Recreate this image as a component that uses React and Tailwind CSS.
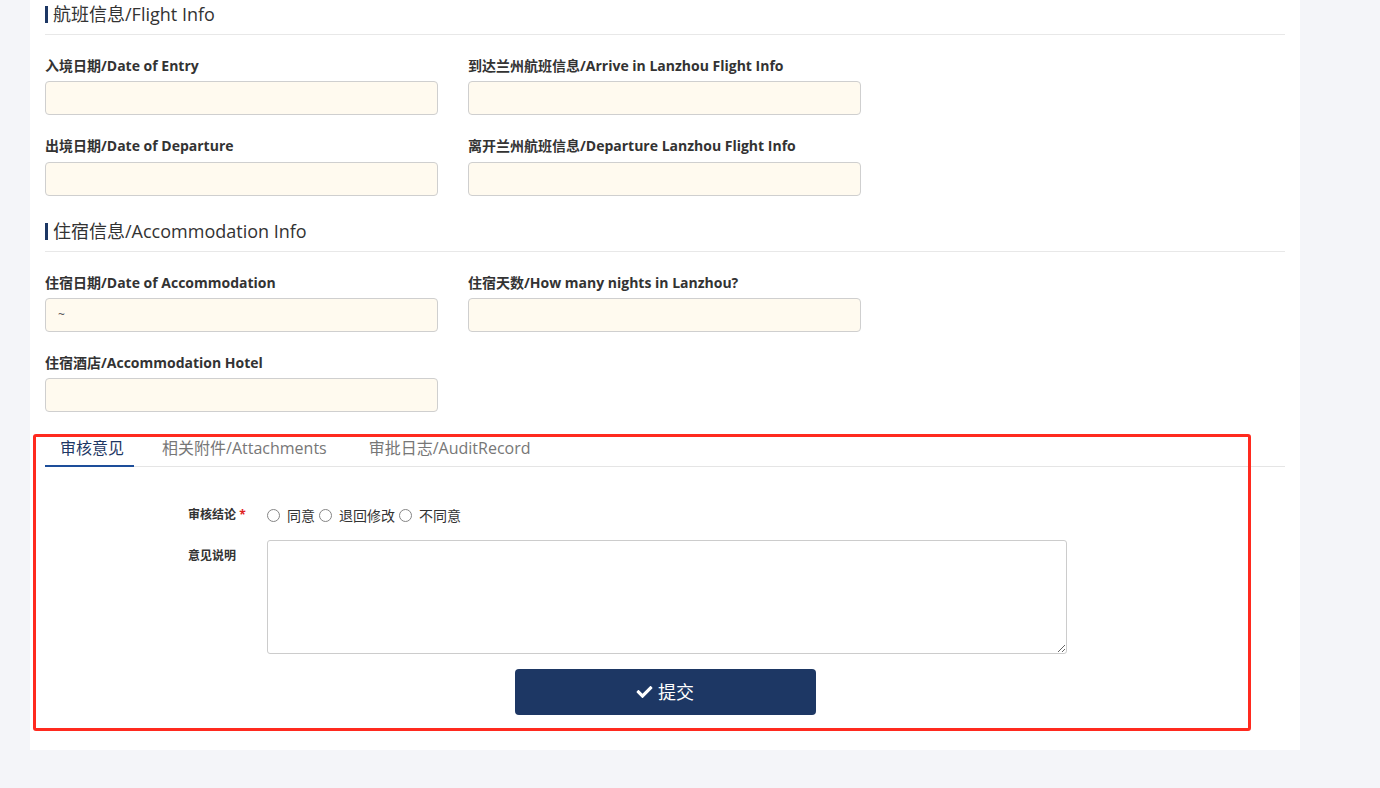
import React from "react";
import { FaCheck } from "react-icons/fa";

const FONT = { fontFamily: '"Open Sans", "Noto Sans CJK SC", sans-serif' };

function SectionTitle({ children }) {
  return (
    <div className="flex items-center border-b border-[#e8e8e8] pb-[6px]">
      <span className="w-[3px] h-[17px] bg-[#1d3764] mr-[5px]" />
      <span className="text-[18px] leading-[28px] text-[#333]">{children}</span>
    </div>
  );
}

function Field({ label, value, gap = "mb-[5px]" }) {
  return (
    <div className="w-[393px] mt-[21px]">
      <div className={"text-[14px] leading-[20px] font-bold text-[#333] whitespace-nowrap " + gap}>{label}</div>
      <div className="h-[34px] rounded-[4px] border border-[#cfcfcf] bg-[#fffaef] px-[12px] flex items-center text-[12px] text-[#555]">
        {value}
      </div>
    </div>
  );
}

function Radio({ label }) {
  return (
    <span className="inline-flex items-center mr-[4px]">
      <span className="w-[13px] h-[13px] rounded-full border border-[#858585] bg-white inline-block" />
      <span className="ml-[7px] text-[14px] text-[#333]">{label}</span>
    </span>
  );
}

export default function App() {
  return (
    <div style={FONT} className="relative min-h-[788px] bg-[#f4f5f9] pl-[30px] pb-[38px]">
      <div className="w-[1270px] bg-white px-[15px] pb-[35px]">
        <SectionTitle>航班信息/Flight Info</SectionTitle>
        <div className="flex gap-[30px]">
          <Field label="入境日期/Date of Entry" />
          <Field label="到达兰州航班信息/Arrive in Lanzhou Flight Info" />
        </div>
        <div className="flex gap-[30px] mb-[21px]">
          <Field label="出境日期/Date of Departure" gap="mb-[6px]" />
          <Field label="离开兰州航班信息/Departure Lanzhou Flight Info" gap="mb-[6px]" />
        </div>
        <SectionTitle>住宿信息/Accommodation Info</SectionTitle>
        <div className="flex gap-[30px]">
          <Field label="住宿日期/Date of Accommodation" value="~" />
          <Field label="住宿天数/How many nights in Lanzhou?" />
        </div>
        <div className="flex gap-[30px]">
          <Field label="住宿酒店/Accommodation Hotel" />
        </div>

        <div className="mt-[23px] flex border-b border-[#e5e5e5]">
          <div className="pl-[15px] pr-[10px] pt-[1px] pb-[5px] leading-[24px] text-[16px] text-[#1d3764] border-b-2 border-[#1d4e9a] -mb-px">审核意见</div>
          <div className="ml-[13px] px-[15px] pt-[1px] pb-[5px] leading-[24px] text-[16px] text-[#777]">相关附件/Attachments</div>
          <div className="ml-[12px] px-[15px] pt-[1px] pb-[5px] leading-[24px] text-[16px] text-[#777]">审批日志/AuditRecord</div>
        </div>

        <div className="pt-[38px]">
          <div className="flex items-center h-[20px]">
            <div className="ml-[143px] w-[79px] text-[12px] font-bold text-[#333]">
              审核结论 <span className="text-[#e02020]">*</span>
            </div>
            <div className="flex items-center">
              <Radio label="同意" />
              <Radio label="退回修改" />
              <Radio label="不同意" />
            </div>
          </div>
          <div className="flex mt-[15px]">
            <div className="ml-[143px] w-[79px] pt-[7px] text-[12px] font-bold text-[#333]">意见说明</div>
            <textarea className="w-[800px] h-[114px] rounded-[3px] border border-[#cccccc] bg-white outline-none" />
          </div>
          <div className="flex justify-center mt-[15px]">
            <button className="w-[301px] h-[46px] rounded-[4px] bg-[#1d3764] text-white text-[18px] flex items-center justify-center gap-[5px]">
              <FaCheck className="w-[17px] h-[16px]" />
              <span>提交</span>
            </button>
          </div>
        </div>
      </div>

      <div className="absolute left-[33px] top-[434px] w-[1218px] h-[297px] border-[3px] border-[#ff2a1f] rounded-[3px] pointer-events-none" />
    </div>
  );
}
